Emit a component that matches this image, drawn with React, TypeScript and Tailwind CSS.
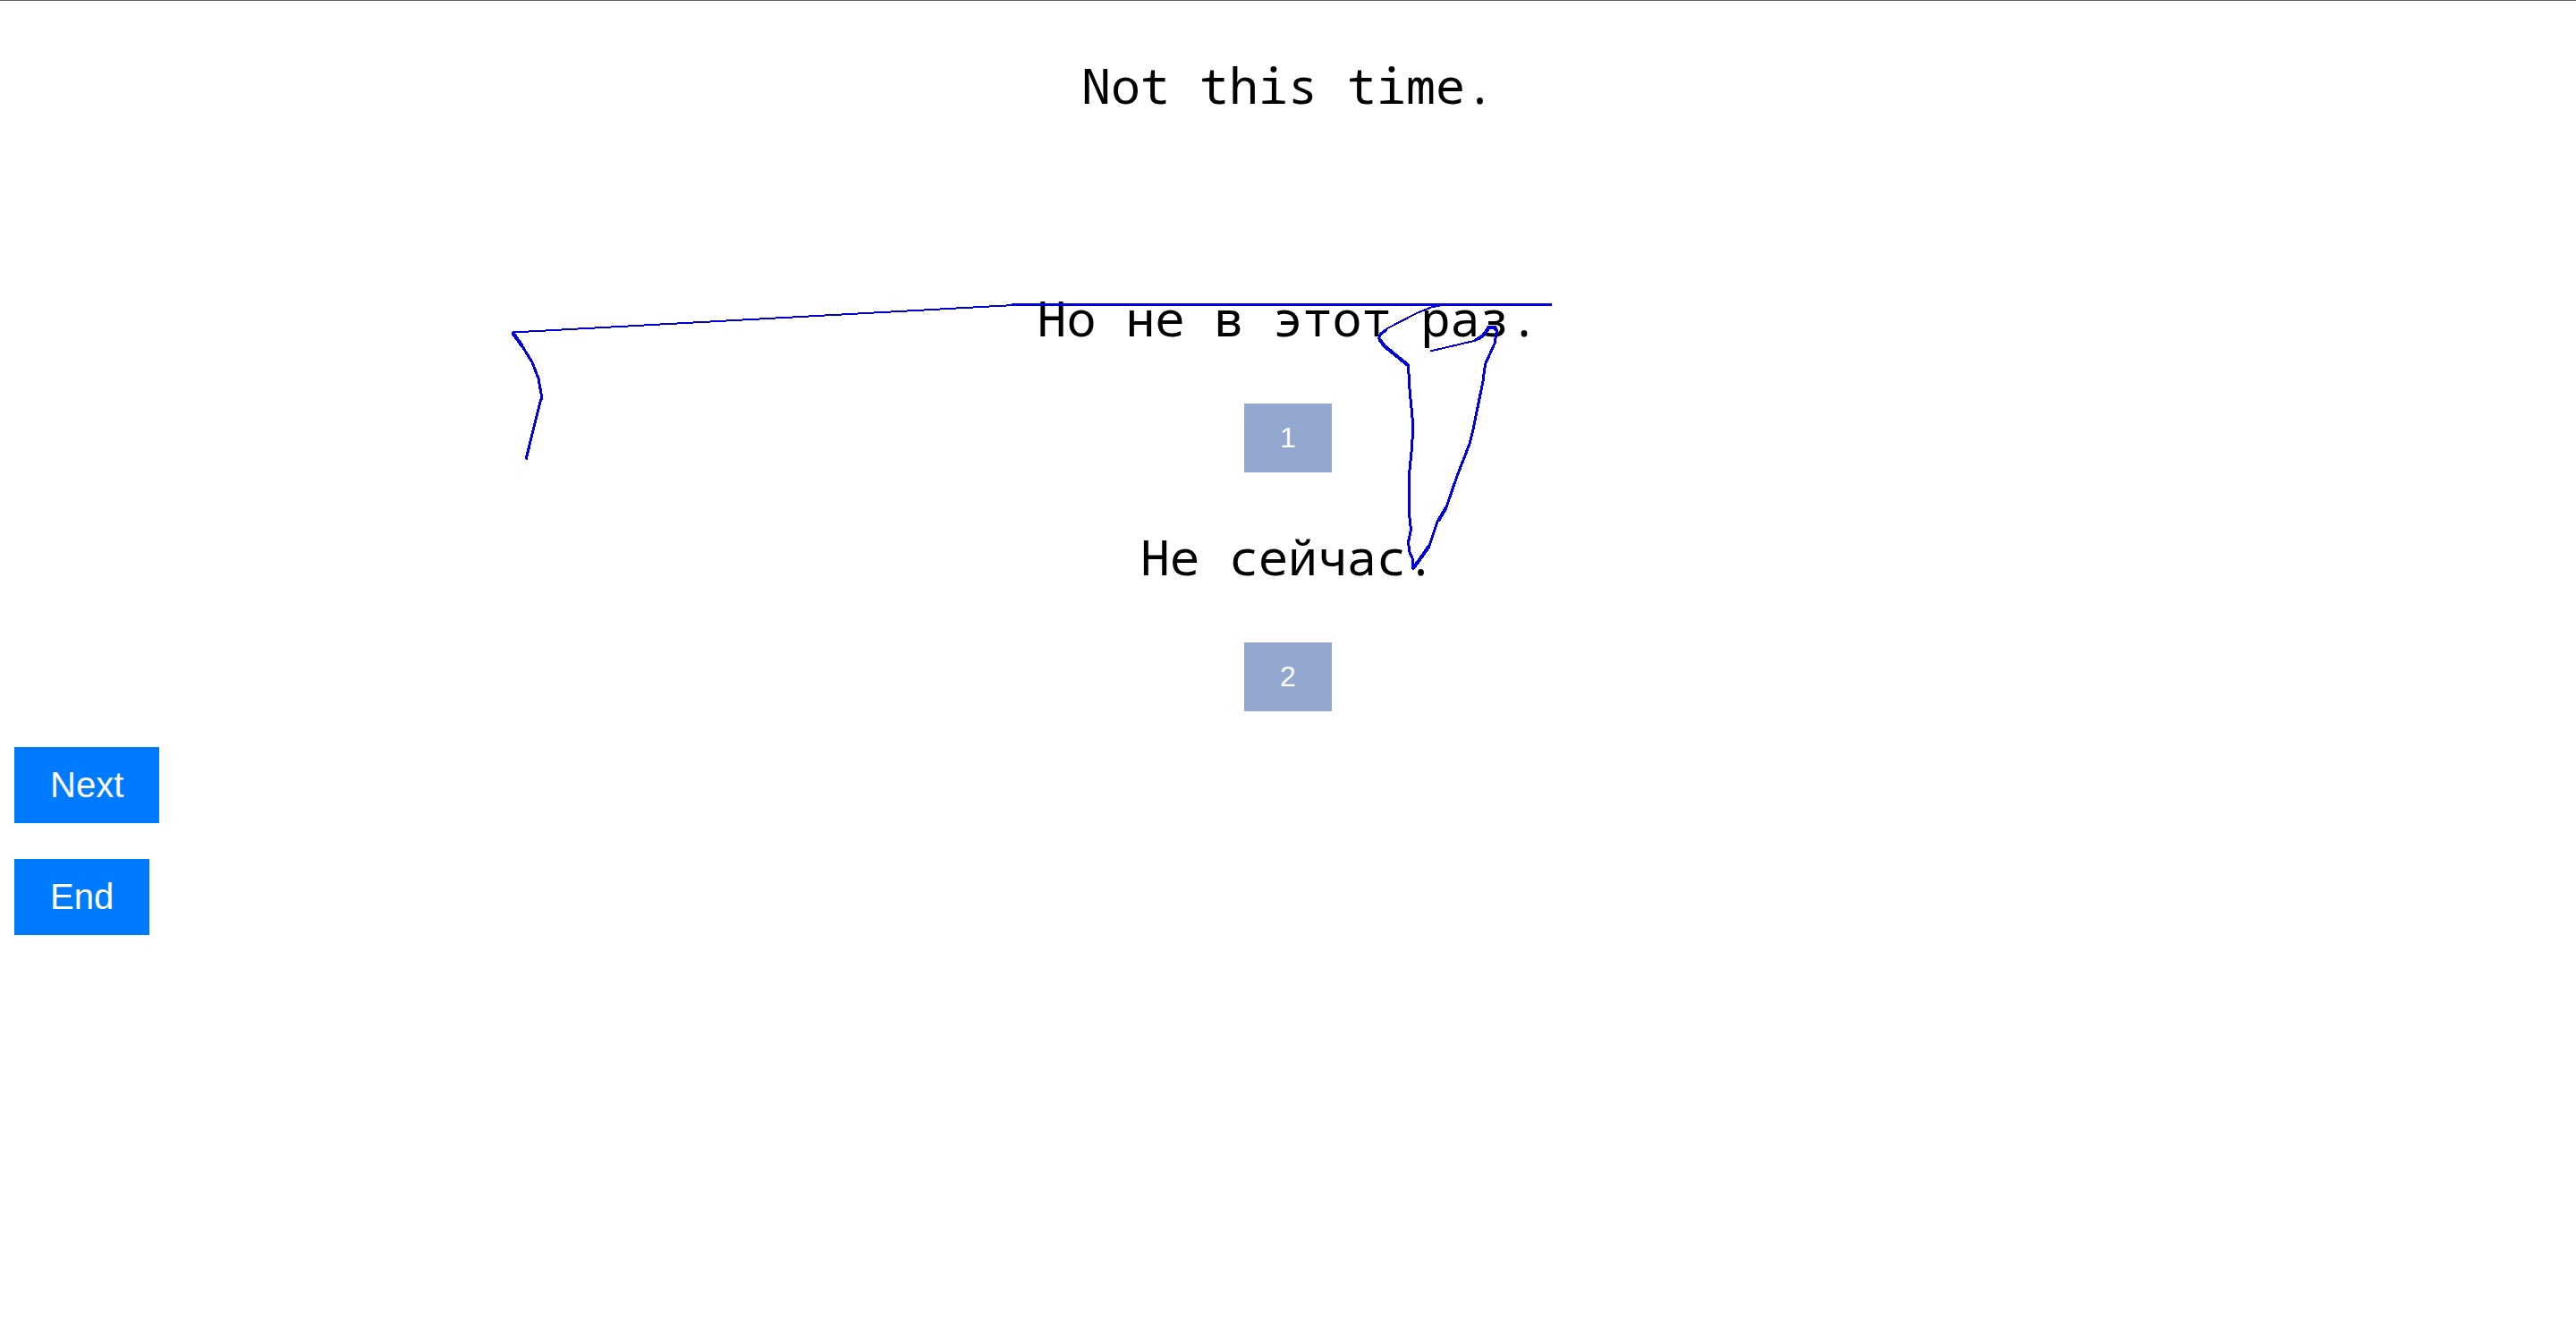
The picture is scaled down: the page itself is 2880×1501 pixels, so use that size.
const STROKE = '#0000dc';

function InkTrace() {
  return (
    <svg
      className="pointer-events-none absolute inset-x-0 -top-px h-full w-full"
      fill="none"
      stroke={STROKE}
      strokeLinejoin="round"
      shapeRendering="crispEdges"
      aria-hidden="true"
    >
      <path
        strokeWidth="3"
        d="M588 513.500L604 449L605.500 445L605 440L602 423L595 405L584 387L577 378L573.500 374V370.500"
      />
      <path strokeWidth="2" d="M573 371.500L1134 341" />
      <path strokeWidth="3" d="M1131 340.500H1735" />
      <path strokeWidth="2" d="M1612 341L1600 343.500L1584 350L1551 367L1543 373L1541 378" />
      <path
        strokeWidth="3"
        d="M1551 368L1544 373L1541.500 378L1548 387L1574.500 408.500L1576 435L1579.500 472V483L1578.500 500L1576 525L1575.500 575L1577.500 592L1574.500 606L1576 617L1579 624V635L1581 635L1598 610L1607 583L1617 567L1629 532L1643 496L1647 480L1658 426L1660.500 407L1671 384L1673.500 369L1671 365L1665 365L1658 375L1648 381"
      />
      <path
        strokeWidth="4"
        d="M574 373L584 387M1542 379L1548 387L1574 408M1581 634L1598 610M1608 582L1617 567M1673 369L1671 365.500H1665L1658 375L1652 379"
      />
      <path strokeWidth="2" d="M1648 381L1599 392.500" />
    </svg>
  );
}

function Sentence({ children }: { children: string }) {
  return (
    <p className="text-center font-['Consolas','Noto_Sans_Mono','DejaVu_Sans_Mono',monospace] text-[55px] leading-[70px]">
      {children}
    </p>
  );
}

function Option({ text, label }: { text: string; label: string }) {
  return (
    <div className="flex flex-col items-center gap-[61px]">
      <Sentence>{text}</Sentence>
      <button
        type="button"
        aria-label={`${label}: ${text}`}
        className="bg-[#93a7d0] px-10 py-5 text-[32px] leading-[37px] text-white"
      >
        {label}
      </button>
    </div>
  );
}

function ActionButton({ children }: { children: string }) {
  return (
    <button type="button" className="bg-[#007bff] px-10 py-5 text-[40px] leading-[45px] text-white">
      {children}
    </button>
  );
}

export default function App() {
  return (
    <main className="relative min-h-screen border-t border-[#666666] bg-white px-4 pt-[59px] font-['Liberation_Sans',Arial,sans-serif] text-black">
      <Sentence>Not this time.</Sentence>
      <div className="mt-[190px] flex flex-col gap-[59px]">
        <Option text="Но не в этот раз." label="1" />
        <Option text="Не сейчас." label="2" />
      </div>
      <div className="mt-10 flex flex-col items-start gap-10">
        <ActionButton>Next</ActionButton>
        <ActionButton>End</ActionButton>
      </div>
      <InkTrace />
    </main>
  );
}
